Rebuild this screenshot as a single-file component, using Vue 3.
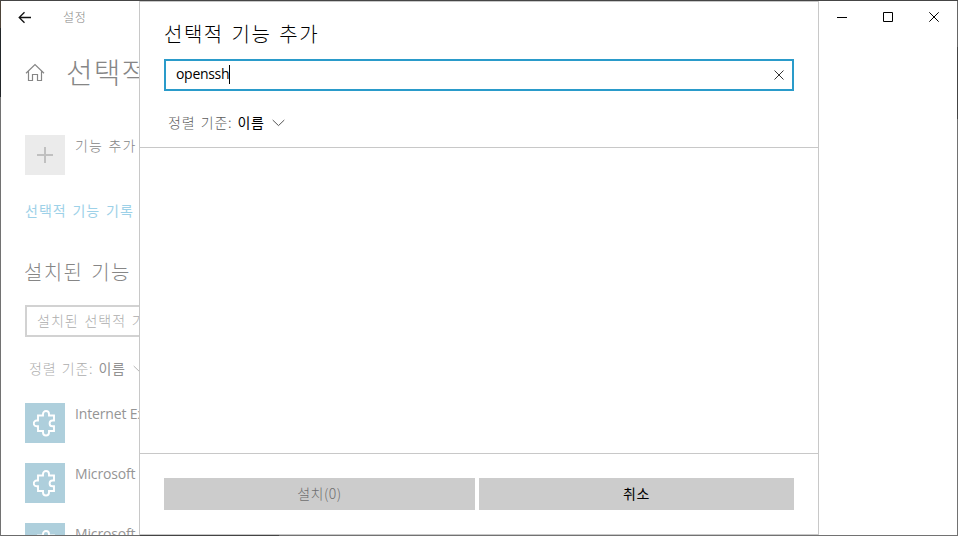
<script setup>
const features = ['Internet Explorer 11', 'Microsoft Quick Assist', 'Microsoft 그림판']
</script>

<template>
  <div class="window">
    <aside class="side">
      <div class="titlebar">
        <svg class="back" width="14" height="14" viewBox="0 0 14 14"><path d="M13 7.500H1.500M6.500 2.200L1.200 7.500l5.300 5.300" /></svg>
        <span class="app-name">설정</span>
      </div>
      <div class="heading">
        <svg class="home" width="20" height="20" viewBox="0 0 20 20"><path d="M1 10.200L10 1.600l9 8.600M3.500 8.400V17.500h4V11.500h5v6h4V8.400" /></svg>
        <h1>선택적 기능</h1>
      </div>
      <div class="add">
        <div class="plus"><svg width="16" height="16" viewBox="0 0 16 16"><path d="M8 0v16M0 8h16" /></svg></div>
        <span class="label ko">기능 추가</span>
      </div>
      <div class="history ko">선택적 기능 기록 보기</div>
      <h2>설치된 기능</h2>
      <div class="filter ko">설치된 선택적 기능 찾기</div>
      <div class="sort faded">
        <span class="sort-key">정렬 기준:</span><span class="sort-value">이름</span>
        <svg class="chevron" width="13" height="8" viewBox="0 0 13 8"><path d="M.7 1l5.800 5.600L12.300 1" /></svg>
      </div>
      <div v-for="(name, i) in features" :key="i" class="feature">
        <div class="tile">
          <svg width="24" height="28" viewBox="0 0 24 28"><path d="M5 6.500h5V5a3 3 0 1 1 6 0v1.500h5v5h-1.500a2.900 2.900 0 0 0 0 5.800H21v4.700h-5v1.500a3 3 0 1 1-6 0V22H5v-4.700H3.700a2.900 2.900 0 0 1 0-5.800H5z" /></svg>
        </div>
        <span class="label latin">{{ name }}</span>
      </div>
    </aside>

    <section class="dialog">
      <header>
        <div class="title">선택적 기능 추가</div>
        <div class="search">
          <span class="query">openssh</span><i class="caret"></i>
          <svg class="clear" width="10" height="10" viewBox="0 0 10 10"><path d="M.5.5l9 9M9.500.5l-9 9" /></svg>
        </div>
        <div class="sort">
          <span class="sort-key">정렬 기준:</span><span class="sort-value">이름</span>
          <svg class="chevron" width="13" height="8" viewBox="0 0 13 8"><path d="M.7 1l5.800 5.600L12.300 1" /></svg>
        </div>
      </header>
      <main></main>
      <footer>
        <button class="install" disabled>설치(0)</button>
        <button class="cancel">취소</button>
      </footer>
    </section>

    <div class="controls">
      <svg width="10" height="10" viewBox="0 0 10 10"><path d="M0 5.500h10" /></svg>
      <svg width="10" height="10" viewBox="0 0 10 10"><path d="M.5.5h9v9h-9z" /></svg>
      <svg width="10" height="10" viewBox="0 0 10 10"><path d="M.3.3l9.400 9.400M9.700.3L.3 9.700" /></svg>
    </div>
  </div>
</template>

<style>
body { margin: 0; background: #fff; overflow: hidden; }
</style>

<style scoped>
* { box-sizing: border-box; }
svg { display: block; flex: none; fill: none; stroke: currentColor; stroke-width: 1; }
h1, h2 { margin: 0; font-weight: 300; }
.window {
  width: 958px; height: 536px; padding: 1px; display: grid;
  grid-template-columns: 138px 680px 138px;
  font-family: "Noto Sans CJK KR", sans-serif; font-size: 14px; font-weight: 300; white-space: nowrap;
  background:
    linear-gradient(#fff, #fff) 1px 1px / 956px 534px no-repeat,
    linear-gradient(#454545, #454545) 0 0 / 958px 1px no-repeat,
    linear-gradient(#4d4439 28px, #222629 28px 97px, #727272 97px) 0 0 / 1px 536px no-repeat,
    linear-gradient(#666 47px, #444 47px 119px, #727272 119px) 957px 0 / 1px 536px no-repeat,
    linear-gradient(90deg, #6b6b6b 140px, #444 140px 279px, #727272 279px) 0 535px / 958px 1px no-repeat;
}
.side { height: 534px; overflow: hidden; padding-left: 24px; color: #868686; }
.titlebar { display: flex; height: 31px; align-items: center; margin-left: -7px; }
.back { color: #111; stroke-width: 1.300; }
.app-name { margin-left: 31px; font-size: 12px; letter-spacing: .8px; }
.heading { display: flex; height: 79px; align-items: center; }
.home { stroke-width: 1.200; position: relative; top: 1px; }
h1 { margin-left: 21px; font-size: 29px; letter-spacing: 1.100px; line-height: 40px; margin-top: -2px; }
.add { display: flex; height: 40px; margin-top: 24px; }
.plus, .tile { width: 40px; height: 40px; flex: none; display: flex; align-items: center; justify-content: center; }
.plus { background: #ebebeb; color: #c0c0c0; }
.plus svg { stroke-width: 2; }
.label { margin-left: 10px; line-height: 20px; }
.ko { letter-spacing: 1px; word-spacing: 1.700px; }
.latin { font-family: "Open Sans", sans-serif; font-weight: 400; letter-spacing: -.15px; line-height: 22px; color: #959595; }
.history { margin-top: 24px; line-height: 22px; color: #9dd1e8; font-weight: 400; }
h2 { margin-top: 34px; margin-left: -1px; font-size: 20px; line-height: 34px; letter-spacing: 1.400px; word-spacing: 2px; }
.filter { width: 220px; height: 32px; margin-top: 16px; border: 2px solid #d2d2d2; padding-left: 10px; line-height: 26px; color: #adadad; }
.sort { display: flex; align-items: center; line-height: 22px; padding-left: 4px; letter-spacing: .8px; word-spacing: 1.500px; }
.sort-key { color: #5c5c5c; }
.sort-value { color: #000; margin: 0 7px 0 5px; font-weight: 400; }
.chevron { color: #555; margin-top: 1px; }
.faded { margin: 20px 0 24px; }
.faded .sort-key { color: #adadad; }
.faded .sort-value { color: #929292; }
.faded .chevron { color: #b5b5b5; }
.feature { display: flex; height: 60px; }
.tile { background: #aecfdc; color: #fff; }
.tile svg { stroke-width: 1.900; }
.dialog { height: 534px; display: grid; grid-template-rows: 146px 1fr 81px; border: 1px solid #c8c8c8; background: #fff; }
header { padding: 15px 24px 0; border-bottom: 1px solid #c8c8c8; }
.title { font-size: 20px; line-height: 34px; letter-spacing: 1.500px; word-spacing: 2px; color: #000; }
.search { display: flex; align-items: center; height: 32px; margin-top: 8px; border: 2px solid #2a9bca; padding: 0 8px 0 10px; }
.query { font-family: "Open Sans", sans-serif; font-weight: 400; color: #000; line-height: 20px; letter-spacing: -.3px; margin-top: -2px; }
.caret { width: 1px; height: 19px; background: #000; margin-top: -2px; }
.clear { margin-left: auto; color: #333; }
header .sort { margin-top: 20px; }
footer { border-top: 1px solid #c8c8c8; padding: 24px 24px 0; display: grid; grid-template-columns: 311px 315px; gap: 4px; align-items: start; }
button { height: 32px; border: 0; padding: 0 0 2px; background: #ccc; color: #000; font: inherit; letter-spacing: .5px; }
.install { color: #6f6f6f; }
.cancel { font-weight: 400; }
.controls { display: flex; gap: 36px; padding: 11px 0 0 18px; color: #000; }
</style>
